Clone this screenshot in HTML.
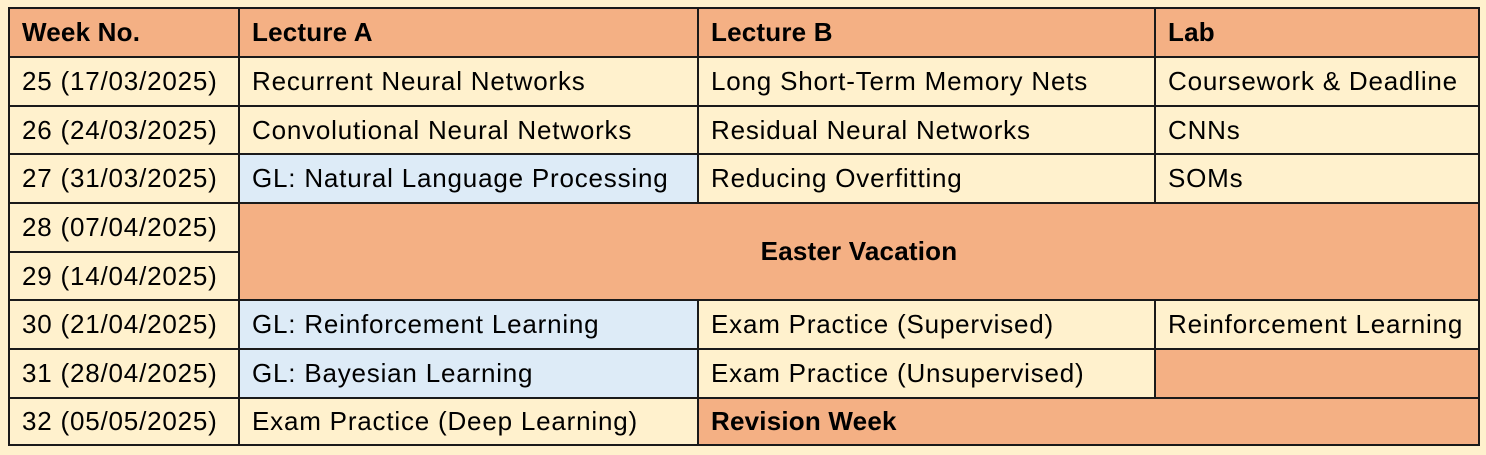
<!DOCTYPE html><html><head><style>
body{margin:0;width:1486px;height:455px;background:#fff1cd;position:relative;overflow:hidden;font-family:"Liberation Sans",sans-serif;font-size:26px;letter-spacing:0.8px;color:#000}
.c{position:absolute;box-sizing:border-box;border:2px solid #1a1a1a;display:flex;align-items:center;padding-left:12px;white-space:nowrap}
.h{background:#f4b084;font-weight:bold;letter-spacing:0.2px}
.y{background:#fff1cd}
.b{background:#ddebf7}
</style></head><body>
<div class="c h" style="left:8px;top:7px;width:232px;height:51px">Week No.</div>
<div class="c h" style="left:238px;top:7px;width:461px;height:51px">Lecture A</div>
<div class="c h" style="left:697px;top:7px;width:459px;height:51px">Lecture B</div>
<div class="c h" style="left:1154px;top:7px;width:326px;height:51px">Lab</div>

<div class="c y" style="left:8px;top:56px;width:232px;height:51px">25 (17/03/2025)</div>
<div class="c y" style="left:238px;top:56px;width:461px;height:51px">Recurrent Neural Networks</div>
<div class="c y" style="left:697px;top:56px;width:459px;height:51px">Long Short-Term Memory Nets</div>
<div class="c y" style="left:1154px;top:56px;width:326px;height:51px">Coursework &amp; Deadline</div>

<div class="c y" style="left:8px;top:105px;width:232px;height:50px">26 (24/03/2025)</div>
<div class="c y" style="left:238px;top:105px;width:461px;height:50px">Convolutional Neural Networks</div>
<div class="c y" style="left:697px;top:105px;width:459px;height:50px">Residual Neural Networks</div>
<div class="c y" style="left:1154px;top:105px;width:326px;height:50px">CNNs</div>

<div class="c y" style="left:8px;top:153px;width:232px;height:51px">27 (31/03/2025)</div>
<div class="c b" style="left:238px;top:153px;width:461px;height:51px">GL: Natural Language Processing</div>
<div class="c y" style="left:697px;top:153px;width:459px;height:51px">Reducing Overfitting</div>
<div class="c y" style="left:1154px;top:153px;width:326px;height:51px">SOMs</div>

<div class="c y" style="left:8px;top:202px;width:232px;height:51px">28 (07/04/2025)</div>
<div class="c y" style="left:8px;top:251px;width:232px;height:50px">29 (14/04/2025)</div>
<div class="c h" style="left:238px;top:202px;width:1242px;height:99px;justify-content:center;padding-left:0">Easter Vacation</div>

<div class="c y" style="left:8px;top:299px;width:232px;height:51px">30 (21/04/2025)</div>
<div class="c b" style="left:238px;top:299px;width:461px;height:51px">GL: Reinforcement Learning</div>
<div class="c y" style="left:697px;top:299px;width:459px;height:51px">Exam Practice (Supervised)</div>
<div class="c y" style="left:1154px;top:299px;width:326px;height:51px">Reinforcement Learning</div>

<div class="c y" style="left:8px;top:348px;width:232px;height:51px">31 (28/04/2025)</div>
<div class="c b" style="left:238px;top:348px;width:461px;height:51px">GL: Bayesian Learning</div>
<div class="c y" style="left:697px;top:348px;width:459px;height:51px">Exam Practice (Unsupervised)</div>
<div class="c h" style="left:1154px;top:348px;width:326px;height:51px"></div>

<div class="c y" style="left:8px;top:397px;width:232px;height:49px">32 (05/05/2025)</div>
<div class="c y" style="left:238px;top:397px;width:461px;height:49px">Exam Practice (Deep Learning)</div>
<div class="c h" style="left:697px;top:397px;width:783px;height:49px">Revision Week</div>
</body></html>
